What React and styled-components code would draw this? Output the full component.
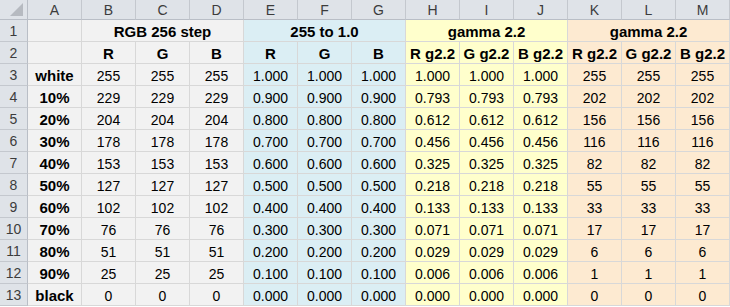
import React from "react";
import styled, { createGlobalStyle } from "styled-components";

const Global = createGlobalStyle`
  html, body { margin: 0; padding: 0; background: #ffffff; }
  body { font-family: "Liberation Sans", Arial, sans-serif; }
`;

const FILL = {
  gray: "#f2f2f2",
  blue: "#dbeef4",
  yellow: "#ffffcc",
  peach: "#fdead1",
};

const Sheet = styled.div`
  display: grid;
  grid-template-columns: 28px repeat(13, 54px);
  grid-template-rows: 20px repeat(13, 22px);
  width: 730px;
  background: #ffffff;
`;

const Corner = styled.div`
  box-sizing: border-box;
  position: relative;
  background: #dfe3e8;
  border-right: 1px solid #b9bec6;
  border-bottom: 1px solid #b9bec6;
  &::after {
    content: "";
    position: absolute;
    right: 4px;
    bottom: 3px;
    width: 0;
    height: 0;
    border-left: 13px solid transparent;
    border-bottom: 13px solid #b6bac0;
  }
`;

const ColHead = styled.div`
  box-sizing: border-box;
  display: flex;
  align-items: center;
  justify-content: center;
  background: #dfe3e8;
  border-right: 1px solid #c4c8ce;
  border-bottom: 1px solid #b9bec6;
  color: #3c3c3c;
  font-size: 14px;
  line-height: 16px;
  padding-top: 1px;
`;

const RowHead = styled.div`
  box-sizing: border-box;
  display: flex;
  align-items: center;
  justify-content: center;
  background: #dfe3e8;
  border-right: 1px solid #b9bec6;
  border-bottom: 1px solid #c4c8ce;
  color: #3c3c3c;
  font-size: 14px;
  line-height: 16px;
  padding-top: 1px;
`;

const Cell = styled.div`
  box-sizing: border-box;
  display: flex;
  align-items: flex-end;
  justify-content: center;
  grid-column: span ${(p) => p.$span || 1};
  background: ${(p) => FILL[p.$fill] || FILL.gray};
  border-right: 1px solid #d8d8d8;
  border-bottom: 1px solid #d8d8d8;
  color: #000000;
  font-size: ${(p) => (p.$bold ? "15px" : "14px")};
  font-weight: ${(p) => (p.$bold ? 700 : 400)};
  line-height: 16px;
  padding-bottom: 1px;
  white-space: nowrap;
`;

const letters = ["A", "B", "C", "D", "E", "F", "G", "H", "I", "J", "K", "L", "M"];
const labels = ["white", "10%", "20%", "30%", "40%", "50%", "60%", "70%", "80%", "90%", "black"];
const rgb = [255, 229, 204, 178, 153, 127, 102, 76, 51, 25, 0];
const unit = ["1.000", "0.900", "0.800", "0.700", "0.600", "0.500", "0.400", "0.300", "0.200", "0.100", "0.000"];
const gam = ["1.000", "0.793", "0.612", "0.456", "0.325", "0.218", "0.133", "0.071", "0.029", "0.006", "0.000"];
const gam255 = [255, 202, 156, 116, 82, 55, 33, 17, 6, 1, 0];

const groups = [
  { fill: "gray", title: "RGB 256 step", sub: ["R", "G", "B"], vals: rgb },
  { fill: "blue", title: "255 to 1.0", sub: ["R", "G", "B"], vals: unit },
  { fill: "yellow", title: "gamma 2.2", sub: ["R g2.2", "G g2.2", "B g2.2"], vals: gam },
  { fill: "peach", title: "gamma 2.2", sub: ["R g2.2", "G g2.2", "B g2.2"], vals: gam255 },
];

export default function App() {
  return (
    <>
      <Global />
      <Sheet>
        <Corner />
        {letters.map((l) => (
          <ColHead key={l}>{l}</ColHead>
        ))}

        <RowHead>1</RowHead>
        <Cell $fill="gray" />
        {groups.map((g, i) => (
          <Cell key={i} $fill={g.fill} $span={3} $bold>
            {g.title}
          </Cell>
        ))}

        <RowHead>2</RowHead>
        <Cell $fill="gray" />
        {groups.map((g, i) =>
          g.sub.map((s, j) => (
            <Cell key={`${i}-${j}`} $fill={g.fill} $bold>
              {s}
            </Cell>
          ))
        )}

        {labels.map((lab, r) => (
          <React.Fragment key={lab}>
            <RowHead>{r + 3}</RowHead>
            <Cell $fill="gray" $bold>
              {lab}
            </Cell>
            {groups.map((g, i) =>
              [0, 1, 2].map((j) => (
                <Cell key={`${i}-${j}`} $fill={g.fill}>
                  {g.vals[r]}
                </Cell>
              ))
            )}
          </React.Fragment>
        ))}
      </Sheet>
    </>
  );
}
